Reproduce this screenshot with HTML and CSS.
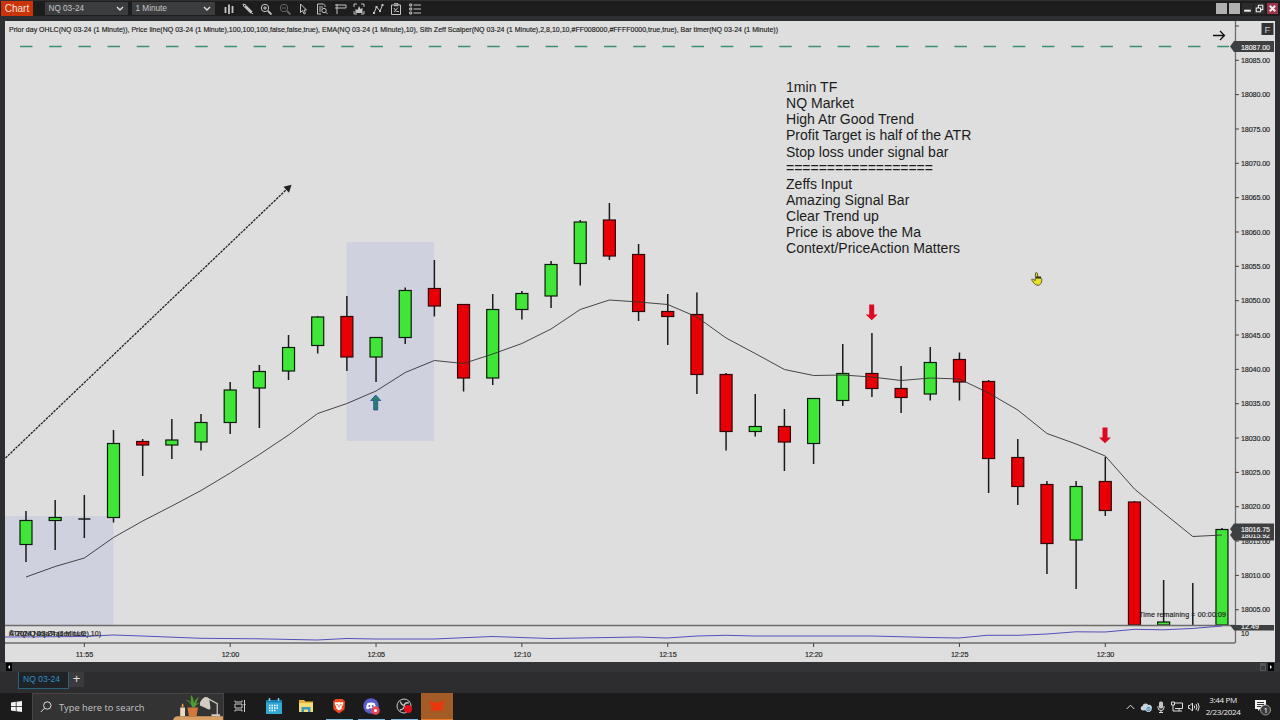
FILE: index.html
```html
<!DOCTYPE html>
<html lang="en">
<head>
  <meta charset="UTF-8">
  <meta name="viewport" content="width=device-width, initial-scale=1.0">
  <title>Chart</title>
  <link rel="stylesheet" href="styles.css">
</head>
<body>
  <div class="wrap">
    <div class="toolbar">
      <div class="logo">Chart</div>
      <div class="select instrument">NQ 03-24<svg width="8" height="6"><path d="M1 1l3 3 3-3"/></svg></div>
      <div class="select period">1 Minute<svg width="8" height="6"><path d="M1 1l3 3 3-3"/></svg></div>
      <div class="tools">
        <svg class="ico" viewBox="0 0 12 12"><path class="thick" d="M2.500 4v6M6 1.500v9.500M9.500 3v7"/></svg>
        <svg class="ico" viewBox="0 0 12 12"><path d="M1 1l3 1M1 1l1 3M9 9.500l2 1.500"/><path class="pen" d="M3 3l6.500 6.500"/></svg>
        <svg class="ico" viewBox="0 0 12 12"><circle cx="5" cy="5" r="3.700"/><path d="M3 5h4M5 3v4"/><path class="thick" d="M8 8l3.500 3.500"/></svg>
        <svg class="ico dim" viewBox="0 0 12 12"><circle cx="5" cy="5" r="3.700"/><path d="M3 5h4"/><path class="thick" d="M8 8l3.500 3.500"/></svg>
        <svg class="ico" viewBox="0 0 12 12"><path d="M3.500 1v8.500l2-2 1.500 3.500 1.500-.700-1.500-3.300h2.500z"/></svg>
        <svg class="ico" viewBox="0 0 12 12"><path d="M9 4V2.500L7.500 1H1.500v10H5M3 4h4M3 6h2.500M3 8h2"/><circle cx="8" cy="7.500" r="2.200"/><path d="M9.500 9l2 2"/></svg>
        <svg class="ico" viewBox="0 0 12 12"><path d="M2 1v10M2 2h9v3H2M0 2h2M0 5h2"/></svg>
        <svg class="ico" viewBox="0 0 12 12"><path d="M1 4V1h3M8 1h3v3M11 8v3H8M4 11H1V8"/><path class="full" d="M2.500 10V6l2 1L6 3l1.500 3 2-1v5z"/></svg>
        <svg class="ico" viewBox="0 0 12 12"><path d="M2 10l2.500-6L8 8l2.500-6"/><path class="full" d="M1 9h2v2H1zM3.500 3h2v2h-2zM7 7h2v2H7zM9.500 1h2v2h-2z"/></svg>
        <svg class="ico" viewBox="0 0 12 12"><path d="M1.500 2h9v9.500h-9zM4 .7h4v2H4M4 5l2.500 4M8 4.500L4 9M7 8.500h2"/></svg>
        <svg class="ico" viewBox="0 0 12 12"><path d="M.7 1h2v2h-2zM.7 5h2v2h-2zM.7 9h2v2h-2zM4.500 2H12M4.500 6H12M4.500 10H12"/></svg>
      </div>
      <div class="win-btns">
        <i class="win-btn light"></i>
        <i class="win-btn light"></i>
        <svg class="win-btn" viewBox="0 0 10 10"><path class="thick" d="M2 7h6"/></svg>
        <svg class="win-btn" viewBox="0 0 10 10"><path d="M4 4V2h4v4H6M2 4.500h4v3.500H2z"/></svg>
        <svg class="win-btn close" viewBox="0 0 10 10"><path class="thick" d="M2.500 2.500l5 5M7.500 2.500l-5 5"/></svg>
      </div>
    </div>

    <div class="chart-wrap">
      <svg class="chart" viewBox="5 21 1270 641" width="1270" height="641">
        <g class="zones">
          <rect x="5" y="516" width="108.500" height="109"/>
          <rect x="346.500" y="242" width="87.500" height="199"/>
        </g>
        <path class="prior" d="M20 46.500H1229"/>
        <text class="ind" x="9" y="31.500" textLength="769">Prior day OHLC(NQ 03-24 (1 Minute)), Price line(NQ 03-24 (1 Minute),100,100,100,false,false,true), EMA(NQ 03-24 (1 Minute),10), Sith Zeff Scalper(NQ 03-24 (1 Minute),2,8,10,10,#FF008000,#FFFF0000,true,true), Bar timer(NQ 03-24 (1 Minute))</text>
        <path class="trend" d="M5.500 458L288 188"/>
        <path class="trend-head" d="M291.500 184.800l-8 2 5.500 6z"/>
        <g class="notes">
          <text x="786" y="92">1min TF</text>
          <text x="786" y="108.100">NQ Market</text>
          <text x="786" y="124.200">High Atr Good Trend</text>
          <text x="786" y="140.300">Profit Target is half of the ATR</text>
          <text x="786" y="156.500">Stop loss under signal bar</text>
          <text x="786" y="172.600" textLength="147">==================</text>
          <text x="786" y="188.700">Zeffs Input</text>
          <text x="786" y="204.800">Amazing Signal Bar</text>
          <text x="786" y="221">Clear Trend up</text>
          <text x="786" y="237.100">Price is above the Ma</text>
          <text x="786" y="253.200">Context/PriceAction Matters</text>
        </g>
        <g class="candles"></g>
        <path class="ema"/>
        <path class="buy" d="M375.700 395l5 5.500h-3v9.500h-4v-9.500h-3z"/>
        <path class="sell" d="M871.700 320.300l6-5.800h-3.500V304.500h-5v10h-3.500z"/>
        <path class="sell" d="M1105 443.300l6-5.800h-3.500V427.500h-5v10h-3.500z"/>
        <path class="next" d="M1213 35.500h11M1220 31l4.500 4.500-4.500 4.500"/>
        <text class="small" x="1139" y="617" textLength="87">Time remaining = 00:00:09</text>

        <path class="panel-line" d="M5 625.500h1230M5 643h1230M1235.500 21v622"/>
        <path class="atr" d="M5 637L84 636.500 113 635 142 636 201 638.300 259 638.800 317 640 347 638.500 376 639 434 639 492 636.500 550 638.500 580 638 638 637 667 638 697 636 726 635.300 755 636 872 636 930 637.500 959 638 987 635.300 1018 635.300 1047 634 1076 631.800 1105 632 1135 629.300 1163 629.800 1192 628.500 1222 626"/>
        <text class="small" x="9" y="636" textLength="92">ATR(NQ 03-24 (1 Minute),10)</text>
        <text class="small" x="9" y="636" textLength="77">© 2024 NinjaTrader, LLC</text>

        <g class="axis"></g>
        <text class="small" x="1241" y="636">10</text>
        <rect class="flag" x="1261.500" y="23" width="12" height="12"/>
        <text class="flag-txt" x="1264.500" y="32.800">F</text>
        <g class="tag"><path d="M1230 46.500l4-5.500h40v11h-40z"/><text x="1241" y="49.500" textLength="29">18087.00</text></g>
        <g class="tag"><path d="M1230 535l4-5.500h40v11h-40z"/><text x="1241" y="538.200" textLength="29">18015.92</text></g>
        <g class="tag"><path d="M1230 529l4-5.500h40v11h-40z"/><text x="1241" y="532.200" textLength="29">18016.75</text></g>
        <svg x="1229" y="625" width="46" height="7" viewBox="1229 625 46 7">
          <g class="tag"><path d="M1230 625l4-5.500h40v11h-40z"/><text x="1241" y="629" textLength="18">12.49</text></g>
        </svg>
        <path class="hand" d="M1035.500 273c1-1 2 0 2 1l.3 3 3 1c1 .5 1.200 1 1 2.500-.2 2.500-1.500 4.500-3.500 4.700-2 .2-4-1.200-5-3l-1.500-2c-.5-1 .5-1.500 1.500-.7l2 1z"/>
        <path class="hand-top" d="M1036 277.500h5"/>
      </svg>
    </div>

    <div class="scroll">
      <svg class="arrow" width="6" height="8"><path d="M4 2v4L2 4z"/></svg>
      <svg class="thumb" width="6" height="8"><path d="M2 3v4M4 3v4"/></svg>
      <svg class="arrow" width="6" height="8"><path d="M2 2v4l2-2z"/></svg>
    </div>
    <div class="tabs">
      <div class="tab">NQ 03-24</div>
      <div class="add">+</div>
    </div>

    <div class="taskbar">
      <div class="start"><svg width="11" height="11" viewBox="0 0 11 11"><path d="M0 1.500l4.800-.7v4.400H0zM5.500.700L11 0v5.200H5.500zM0 5.900h4.800v4.400L0 9.600zM5.500 5.900H11V11l-5.500-.7z"/></svg></div>
      <div class="search">
        <svg width="12" height="12" viewBox="0 0 12 12"><circle cx="7.300" cy="4.500" r="3.700"/><path d="M4.600 7.200L.8 11"/></svg>
        <span>Type here to search</span>
        <svg class="art" width="50" height="26" viewBox="0 0 52 27">
          <path fill="#d9a066" d="M0 27q1-4 5-4h47v4z"/>
          <path fill="#ecd9c0" d="M7.500 14h5v9h-5z"/><path fill="#f0a030" d="M10 9.500q2 3 0 4.500-2-1.500 0-4.500z"/>
          <path fill="#d3763a" d="M15 14h11l-1.500 9h-8z"/>
          <path fill="#4f9d33" d="M20 14Q18 8 13 6q4 0 6 4-1-6 0-9 3 4 2.500 9Q23 5 27 3q-2 4-3 7l4-1q-4 2-6 5z"/>
          <path fill="none" stroke="#c9c4bc" stroke-width="1.300" d="M35 4l11 6v13"/>
          <path fill="#d2ccc2" d="M33 3q5 0 5 4l1 8q-1 2-4 0l-7-3q-1-5 5-9zM40 21h9v2h-9z"/>
        </svg>
      </div>
      <div class="apps">
        <div class="app"><svg width="12" height="12" viewBox="0 0 12 12"><path class="line" d="M1 .5v1.500h7V.5M1 4h7v4H1zM1 11.500V10h7v1.500M10.500 0v12M9.500 4.500h2"/></svg></div>
        <div class="app"><svg width="16" height="16" viewBox="0 0 16 16"><path fill="#35a9d6" d="M0 2h16v14H0z"/><path fill="#1b7eb0" d="M0 2h16v2.500H0z"/><path stroke="#7fd0ef" stroke-width="1.500" d="M3.500 0v3M12.500 0v3"/><path stroke="#fff" stroke-width="1.500" stroke-dasharray="1.500 1" d="M3 7.500h10M3 10h10M3 12.500h7"/></svg></div>
        <div class="app"><svg width="16" height="14" viewBox="0 0 16 14"><path fill="#e6b432" d="M1 1h5l1.500 1.500H15V6H1z"/><path fill="#f7db74" d="M1 4h14v9H1z"/><path fill="#4297bd" d="M3.500 8h9v5h-2.500v-2.500H6V13H3.500z"/></svg></div>
        <div class="app open"><svg width="14" height="16" viewBox="0 0 14 16"><path fill="#ee4a24" d="M3.500 1h7l2.500 2.500-.5 8L7 15.500l-5.500-4L1 3.500z"/><path fill="#fff" d="M3 4l2.500.5L7 4l1.500.5L11 4l.3 2-1.800 3 .5 1.200L7 12.500 4 10.200 4.500 9 2.700 6z"/><path stroke="#ee4a24" d="M4.500 6.500l2 .8M9.500 6.500l-2 .8M7 8v1.500"/></svg></div>
        <div class="app open"><svg width="17" height="17" viewBox="0 0 17 17"><circle cx="8" cy="8" r="7.800" fill="#5a5fc8"/><path fill="#fff" d="M4.500 5q3.500-1.200 7 0 1.500 2.500 1.300 5.500-1.500 1-2.500.5l-.6-.8H6.300l-.6.800q-1 .5-2.500-.5Q3 7.500 4.500 5z"/><circle cx="6.300" cy="8" r="1" fill="#5a5fc8"/><circle cx="9.700" cy="8" r="1" fill="#5a5fc8"/><circle cx="12.500" cy="12.500" r="4.300" fill="#e4485a"/><circle cx="12.500" cy="12.500" r="1.500" fill="#fff"/></svg></div>
        <div class="app open"><svg width="17" height="16" viewBox="0 0 17 16"><circle cx="8" cy="8" r="7" fill="#222" stroke="#c8c8c8"/><path fill="none" stroke="#c8c8c8" stroke-width="1.300" d="M4.500 3.500q.5 3.500 4 4M13 5q-3.500-1-5 2.500M4 12q4-.5 4.500-4.500"/><circle cx="12" cy="11" r="4" fill="#e3101c"/></svg></div>
        <div class="app active"><svg width="16" height="12" viewBox="0 0 16 12"><path fill="#e8380d" d="M0 1l5 1.500L8 2l3 .5L16 0l-2 5v5l-4 1-3-.5-4.500.500L2 6z"/></svg></div>
      </div>
      <div class="tray">
        <svg width="9" height="6" viewBox="0 0 9 6"><path d="M.7 5L4.500 1.200 8.300 5"/></svg>
        <svg width="12" height="10" viewBox="0 0 12 10"><path class="cloud" d="M2.500 8.500a2.300 2.300 0 010-4.500 3.300 3.300 0 016-1 2.500 2.500 0 011.500 5z"/><circle cx="8.500" cy="7" r="2.700" fill="#3b8fc4"/><path d="M7.200 7h2.600"/></svg>
        <svg width="8" height="12" viewBox="0 0 8 12"><rect class="full" x="2" y="0.500" width="4" height="7" rx="1.500"/><path d="M1 5v1.500a3 3 0 006 0V5M4 9.500V12M2 11.500h4"/></svg>
        <svg width="12" height="11" viewBox="0 0 12 11"><path d="M4 2h7.500v5.500H4M6 10h5M8 7.500V10M.5 1h3v3h-3zM2 4v6h4"/></svg>
        <svg width="12" height="10" viewBox="0 0 12 10"><path d="M.5 3.500h1.500L4.500 1v8L2 6.500H.5zM6.200 3.500q1 1.500 0 3M8 2q2 3 0 6M9.800.8q2.800 4 0 8.400"/></svg>
      </div>
      <div class="clock"><span>3:44 PM</span><span>2/23/2024</span></div>
      <div class="notif">
        <svg width="18" height="18" viewBox="0 0 18 18"><path class="note" d="M1 2h11v9H6l-2 2v-2H1z"/><path class="note-line" d="M3 4.500h7M3 6.500h7M3 8.500h4"/><circle cx="11.500" cy="12" r="5"/><text x="9.500" y="15">1</text></svg>
      </div>
    </div>
  </div>
  <script src="chart.js"></script>
</body>
</html>
```

FILE: styles.css
```css
html, body{
  margin: 0;
  padding: 0;
  height: 100%;
  overflow: hidden;
  background-color: #2d2e31;
  font-family: "Liberation Sans", Arial, sans-serif;
}
svg{
  display: block;
}
.wrap{
  width: 1280px;
  height: 720px;
  display: flex;
  flex-direction: column;
}

/* top toolbar */
.toolbar{
  height: 16px;
  display: flex;
  align-items: center;
  background-color: #1d1d1d;
  border-top: 1px solid #303030;
  box-sizing: border-box;
}
.logo{
  width: 32px;
  height: 15px;
  line-height: 15px;
  margin-left: 1px;
  text-align: center;
  background-color: #cb3309;
  color: #f5e4dc;
  font-size: 10px;
}
.select{
  height: 13px;
  padding: 0 4px 0 3.500px;
  box-sizing: border-box;
  display: flex;
  align-items: center;
  justify-content: space-between;
  background-color: #3c3d3f;
  color: #c6c6c6;
  font-size: 8.200px;
}
.select svg{
  fill: none;
  stroke: #ddd;
  stroke-width: 1.400;
}
.instrument{
  width: 83px;
  margin-left: 12px;
}
.period{
  width: 83px;
  margin-left: 4px;
}
.tools{
  display: flex;
  gap: 6.600px;
  margin-left: 8px;
}
.ico{
  width: 12px;
  height: 12px;
  fill: none;
  stroke: #c4c4c4;
  stroke-width: 1;
}
.thick{
  stroke-width: 1.800;
}
.pen{
  stroke-width: 2.800;
}
.full{
  fill: #c4c4c4;
  stroke: none;
}
.dim{
  stroke: #666;
}
.win-btns{
  display: flex;
  gap: 1.700px;
  margin-left: auto;
  margin-right: 2px;
}
.win-btn{
  width: 11px;
  height: 11px;
  background-color: #2c2c2c;
  fill: none;
  stroke: #eee;
}
.light{
  background-color: #b0b0b0;
}
.close{
  background-color: #99354c;
}

/* chart */
.chart-wrap{
  margin: 5px 5px 0;
  height: 641px;
  background-color: #dedede;
}
.zones rect{
  fill: #d0d1df;
}
.prior{
  stroke: #3c8e74;
  stroke-width: 1.500;
  stroke-dasharray: 12.500 16.700;
}
.ind, .small, .axis text, .tag text{
  font-size: 7px;
  fill: #1c1c1c;
  stroke: #1c1c1c;
  stroke-width: 0.150;
}
.axis text{
  font-size: 7.200px;
}
.axis path{
  stroke: #444;
}
.trend{
  stroke: #222;
  stroke-width: 1.300;
  stroke-dasharray: 2.500 1;
}
.trend-head{
  fill: #222;
}
.notes text{
  font-size: 14.050px;
  fill: #1c1c1c;
}
.wick{
  stroke: #1a1a1a;
  stroke-width: 1.500;
}
.up, .down{
  stroke: #0c1a0c;
  stroke-width: 1.200;
  fill: #40e637;
}
.down{
  stroke: #300606;
  fill: #e80006;
}
.ema{
  fill: none;
  stroke: #333;
  stroke-width: 0.900;
}
.buy{
  fill: #24806c;
  stroke: #1d4c9c;
  stroke-width: 0.800;
}
.sell{
  fill: #dd0a22;
}
.next{
  fill: none;
  stroke: #111;
  stroke-width: 1.300;
}
.panel-line{
  fill: none;
  stroke: #6c6c6c;
  stroke-width: 1.300;
}
.atr{
  fill: none;
  stroke: #5550bb;
  stroke-width: 1;
}
.flag{
  fill: #333;
}
.flag-txt{
  font-size: 9.500px;
  fill: #ccc;
}
.tag path{
  fill: #3e3f41;
}
.tag text{
  fill: #f4f4f4;
  stroke: #f4f4f4;
}
.hand{
  fill: #e8e12c;
  stroke: #4c4a20;
  stroke-width: 0.900;
}
.hand-top{
  stroke: #33320c;
  stroke-width: 2;
}

/* under the chart */
.scroll{
  height: 10px;
  display: flex;
  align-items: center;
  padding: 0 6px;
  background-color: #333436;
}
.arrow{
  background-color: #000;
  fill: #fff;
}
.thumb{
  margin-left: auto;
  margin-right: 2px;
  background-color: #555;
  stroke: #222;
}
.tabs{
  height: 21px;
  display: flex;
  align-items: flex-start;
  padding-left: 18px;
  background-color: #2d2d2f;
}
.tab{
  width: 51px;
  height: 17px;
  line-height: 15px;
  box-sizing: border-box;
  border: 1px solid #29617f;
  border-top: 0;
  padding-right: 4px;
  text-align: center;
  color: #2f8fc6;
  font-size: 8.500px;
  background-color: #1f2326;
}
.add{
  width: 15px;
  height: 15px;
  line-height: 14px;
  text-align: center;
  color: #ddd;
  font-size: 13px;
  background-color: #3a3a3d;
}

/* taskbar */
.taskbar{
  height: 27px;
  display: flex;
  align-items: stretch;
  background-color: #1b1b1b;
  color: #eee;
  font-family: "Open Sans", "Noto Sans", sans-serif;
}
.start{
  width: 32px;
  display: flex;
  align-items: center;
  justify-content: center;
  fill: #f3f3f3;
}
.search{
  width: 192px;
  box-sizing: border-box;
  border: 1px solid #454545;
  border-bottom: 0;
  display: flex;
  align-items: center;
  padding-left: 7px;
  background-color: #333;
  color: #c4c4c4;
  font-size: 9.300px;
}
.search > svg:first-child{
  fill: none;
  stroke: #ddd;
}
.search span{
  margin-left: 7px;
}
.search .art{
  margin-left: auto;
}
.apps{
  display: flex;
}
.app{
  width: 27px;
  margin-left: 5.700px;
  display: flex;
  align-items: center;
  justify-content: center;
  box-sizing: border-box;
  border-bottom: 1px solid transparent;
}
.app:first-child{
  margin-left: 2px;
  margin-right: 1.500px;
}
.open{
  border-bottom-color: #7cbbe4;
}
.active{
  width: 32px;
  margin-left: 3.500px;
  background-color: #a45c26;
  border-bottom-color: #ee7a24;
}
.line{
  fill: none;
  stroke: #ccc;
}
.tray{
  margin-left: auto;
  display: flex;
  align-items: center;
  gap: 5.300px;
  fill: none;
  stroke: #ddd;
}
.cloud{
  fill: #c9d3da;
  stroke: none;
}
.clock{
  width: 46px;
  padding-bottom: 1px;
  display: flex;
  flex-direction: column;
  justify-content: center;
  align-items: center;
  font-size: 8px;
  line-height: 12px;
  letter-spacing: -0.350px;
}
.notif{
  width: 34px;
  display: flex;
  align-items: center;
  justify-content: center;
}
.note{
  fill: #f2f2f2;
}
.note-line{
  stroke: #333;
}
.notif circle{
  fill: #3a3a3a;
  stroke: #999;
}
.notif text{
  fill: #fff;
  font-size: 8px;
}
```

FILE: chart.js
```js
let ns = 'http://www.w3.org/2000/svg'
let candlesBox = document.querySelector('.candles')
let axis = document.querySelector('.axis')
let ema = document.querySelector('.ema')

let first = 26
let step = 29.17
let bottom = 625

// high, body top, body bottom, low, up(1) / down(0)
let bars = [
  [511, 520.5, 544.5, 562, 1], [500, 517.5, 520.5, 550, 1], [495, 519, 519, 538, 1],
  [430, 443.5, 517.5, 522.5, 1], [439, 441.5, 445, 476, 0], [419, 440, 445, 459, 1],
  [414, 422.5, 442, 450.5, 1], [382, 390, 422.5, 434, 1], [365, 371.5, 388, 428, 1],
  [335, 347.5, 371, 380, 1], [316, 317, 345.5, 353.5, 1], [296, 316.5, 357, 371, 0],
  [337, 337.5, 357, 382, 1], [287.5, 290.5, 337.5, 344, 1], [260, 288.5, 306, 316.5, 0],
  [304, 304.5, 378, 391.5, 0], [294, 309.5, 378, 385, 1], [291, 293.5, 309.5, 319.5, 1],
  [261, 264.5, 296, 308, 1], [220, 222, 263.5, 285.5, 1], [203, 220, 256, 260, 0],
  [244, 254.5, 311.5, 321, 0], [294, 311.5, 316.5, 345, 0], [292.5, 314.5, 374.5, 394, 0],
  [373, 374.5, 431.5, 450.5, 0], [394, 426.5, 431.5, 436.5, 1], [409, 426.5, 442, 471, 0],
  [398, 398.5, 443.5, 464, 1], [344, 373.5, 400.5, 406, 1], [333, 373.5, 388.5, 397, 0],
  [366, 388.5, 397.5, 413, 0], [347, 362.5, 394, 400.5, 1], [352.5, 359.5, 382, 400.5, 0],
  [380, 381.5, 458.5, 493, 0], [439, 457.5, 486.5, 505, 0], [481, 484.5, 543.5, 574, 0],
  [481, 486.5, 540, 589, 1], [457, 481.5, 510.5, 516, 0], [501, 502, 625, 625, 0],
  [580, 622, 625, 625, 1], [583, 625, 625, 625, 1], [528, 529.5, 625, 625, 1]
]
let emaY = [
  577, 566.5, 558, 537.5, 521, 506, 490.5, 473, 454.5, 435, 413.5, 403.5, 391, 372.5,
  360.5, 363.5, 354, 343.5, 329, 309.5, 300, 302, 304.5, 317, 338, 353.5, 369.5, 375.5,
  375, 377, 380.5, 378, 379, 393, 410, 433.5, 444, 456, 489, 513, 536.5, 535
]

function add(parent, name, attrs, text){
  let el = document.createElementNS(ns, name)
  for (let k in attrs) {
    el.setAttribute(k, attrs[k])
  }
  if(text) el.textContent = text
  parent.appendChild(el)
}

for (let i = 0; i < bars.length; i++) {
  let [high, top, low2, low, up] = bars[i]
  let x = first + i * step
  add(candlesBox, 'path', { class: 'wick', d: `M${x} ${high}V${low}` })
  if(top === low2){
    if(top < bottom) add(candlesBox, 'path', { class: 'wick', d: `M${x - 6} ${top}h12` })
  }else{
    add(candlesBox, 'rect', { class: up ? 'up' : 'down', x: x - 6, y: top, width: 12, height: low2 - top })
  }
}
ema.setAttribute('d', 'M' + emaY.map((y, i) => (first + i * step) + ' ' + y).join('L'))

// price labels, 5 points apart
for (let i = 0; i < 17; i++) {
  let y = 60.3 + i * 34.34
  add(axis, 'path', { d: `M1235 ${y}h4` })
  add(axis, 'text', { x: 1241, y: y + 2.7, textLength: 29 }, (18085 - i * 5) + '.00')
}
add(axis, 'path', { d: 'M1235 26h4' })

let times = ['11:55', '12:00', '12:05', '12:10', '12:15', '12:20', '12:25', '12:30']
for (let i = 0; i < times.length; i++) {
  let x = first + (2 + i * 5) * step
  add(axis, 'path', { d: `M${x} 643v4` })
  add(axis, 'text', { x: x - 8.5, y: 657.2, textLength: 17.5 }, times[i])
}
```
